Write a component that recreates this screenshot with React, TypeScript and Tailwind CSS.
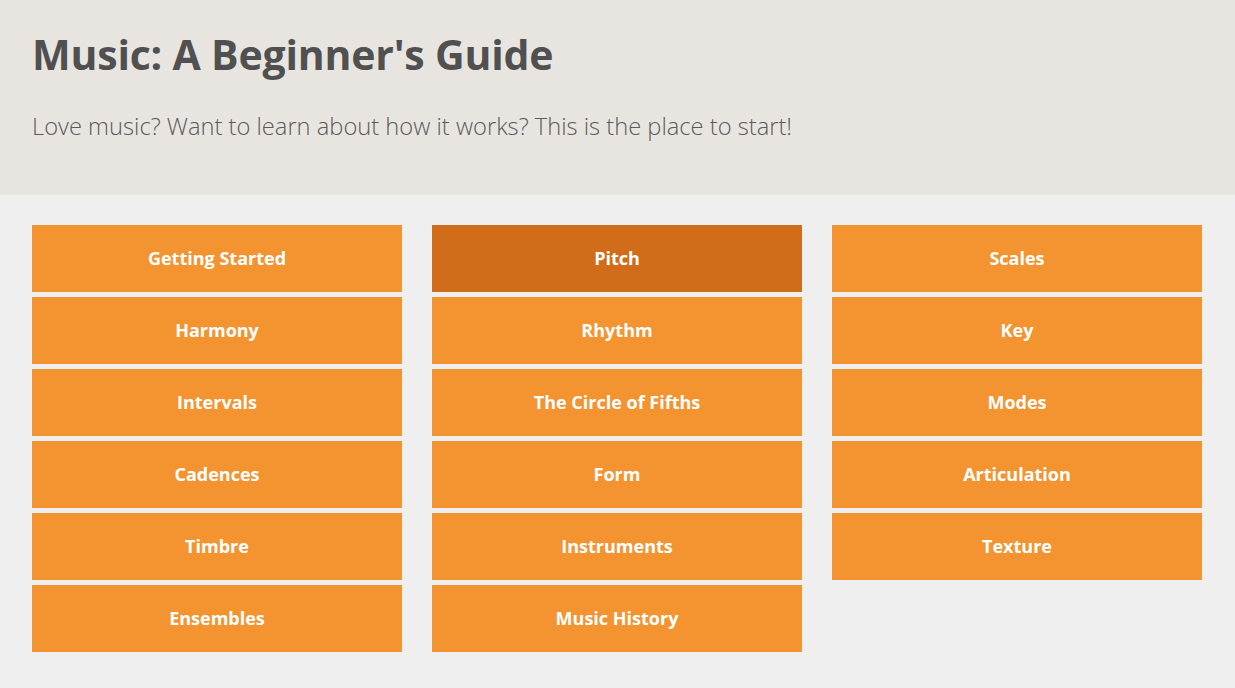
import React from 'react';

const columns: string[][] = [
  ['Getting Started', 'Harmony', 'Intervals', 'Cadences', 'Timbre', 'Ensembles'],
  ['Pitch', 'Rhythm', 'The Circle of Fifths', 'Form', 'Instruments', 'Music History'],
  ['Scales', 'Key', 'Modes', 'Articulation', 'Texture'],
];

export default function App() {
  return (
    <div className="min-h-screen bg-[#efefef] font-['Open_Sans',sans-serif]">
      {/* Header */}
      <header className="h-[195px] bg-[#e8e5e1] px-8 pt-[27px]">
        <h1 className="text-[41px] leading-[54px] font-bold tracking-[-0.2px] text-[#505050]">
          Music: A Beginner's Guide
        </h1>
        <p className="mt-[29px] text-[23.7px] leading-[32px] font-light text-[#5a5a5a]">
          Love music? Want to learn about how it works? This is the place to start!
        </p>
      </header>

      {/* Topic tiles */}
      <main className="grid grid-cols-3 gap-[30px] pl-8 pr-[33px] pt-[30px]">
        {columns.map((col, ci) => (
          <div key={ci} className="flex flex-col gap-[5px]">
            {col.map((topic) => (
              <a
                key={topic}
                href="#"
                className={`flex h-[67px] items-center justify-center text-[18px] font-bold text-white ${
                  topic === 'Pitch' ? 'bg-[#d06c1a]' : 'bg-[#f49431]'
                }`}
              >
                {topic}
              </a>
            ))}
          </div>
        ))}
      </main>
    </div>
  );
}
